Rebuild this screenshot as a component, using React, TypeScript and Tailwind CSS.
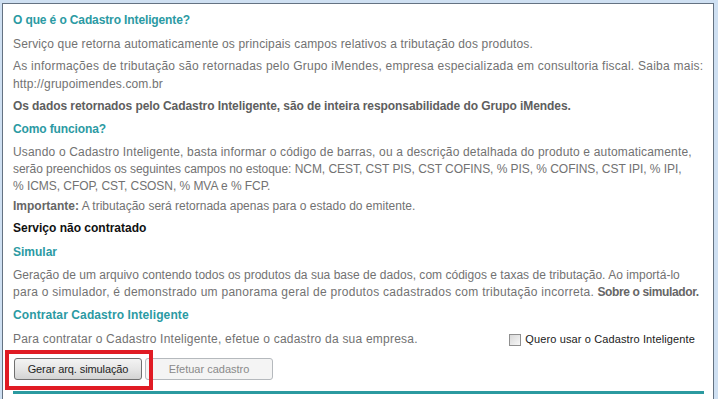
import React from "react";

const body = "text-[12px] leading-[17px] text-[#727272]";
const head = "text-[12px] leading-[17px] font-bold text-[#2b9aa3]";

export default function App() {
  return (
    <div
      className="w-[718px] h-[399px] overflow-hidden bg-[#cfe0f2] pt-[3px] pl-[2px] pr-[4px]"
      style={{ fontFamily: '"Liberation Sans", Arial, sans-serif' }}
    >
      <div className="h-[400px] bg-white border-l border-t border-r border-[#647282] pl-[10px] pr-[8px] flex flex-col">
        <div className={`${head} mt-[8px] tracking-[-0.12px]`}>O que é o Cadastro Inteligente?</div>
        <div className={`${body} mt-[7px] tracking-[0.155px] whitespace-nowrap`}>
          Serviço que retorna automaticamente os principais campos relativos a tributação dos produtos.
        </div>
        <div className={`${body} mt-[4px] leading-[18px] whitespace-nowrap`}>
          <div className="tracking-[0.245px]">
            As informações de tributação são retornadas pelo Grupo iMendes, empresa especializada em consultoria fiscal. Saiba mais:
          </div>
          <div className="tracking-[0.15px]">http://grupoimendes.com.br</div>
        </div>
        <div className="text-[12px] leading-[17px] font-bold text-[#5e5e5e] mt-[5px] tracking-[-0.08px] whitespace-nowrap">
          Os dados retornados pelo Cadastro Inteligente, são de inteira responsabilidade do Grupo iMendes.
        </div>
        <div className={`${head} mt-[6px] tracking-[-0.12px]`}>Como funciona?</div>
        <div className={`${body} mt-[6px] whitespace-nowrap`}>
          <div className="tracking-[0.17px]">
            Usando o Cadastro Inteligente, basta informar o código de barras, ou a descrição detalhada do produto e automaticamente,
          </div>
          <div className="tracking-[-0.05px]">
            serão preenchidos os seguintes campos no estoque: NCM, CEST, CST PIS, CST COFINS, % PIS, % COFINS, CST IPI, % IPI,
          </div>
          <div className="tracking-[-0.05px]">% ICMS, CFOP, CST, CSOSN, % MVA e % FCP.</div>
        </div>
        <div className={`${body} mt-[3px] whitespace-nowrap`}>
          <span className="font-bold text-[#666666]">Importante:</span> A tributação será retornada apenas para o estado do emitente.
        </div>
        <div className="text-[12px] leading-[17px] font-bold text-[#111111] mt-[5px]">Serviço não contratado</div>
        <div className={`${head} mt-[7px]`}>Simular</div>
        <div className={`${body} mt-[5px] whitespace-nowrap`}>
          <div className="tracking-[0.02px] leading-[18px]">
            Geração de um arquivo contendo todos os produtos da sua base de dados, com códigos e taxas de tributação. Ao importá-lo
          </div>
          <div className="leading-[17px]">
            <span className="tracking-[0.277px]">
              para o simulador, é demonstrado um panorama geral de produtos cadastrados com tributação incorreta.
            </span>{" "}
            <span className="font-bold text-[#666666] tracking-[-0.37px]">Sobre o simulador.</span>
          </div>
        </div>
        <div className={`${head} mt-[6px] tracking-[0.1px]`}>Contratar Cadastro Inteligente</div>
        <div className="flex items-center justify-between mt-[7px] pr-[10px]">
          <div className={`${body} tracking-[0.22px] whitespace-nowrap`}>
            Para contratar o Cadastro Inteligente, efetue o cadastro da sua empresa.
          </div>
          <label className="flex items-center gap-[4px] text-[11px] leading-[17px] text-[#1a1a1a] tracking-[0.12px] whitespace-nowrap">
            <span className="w-[12px] h-[12px] border border-[#8f8f8f] bg-gradient-to-br from-[#d8d8d8] to-[#f7f7f7] inline-block" />
            Quero usar o Cadastro Inteligente
          </label>
        </div>
        <div className="flex gap-[3px] mt-[10px] ml-[1px]">
          <div className="relative">
            <button className="w-[128px] h-[22px] rounded-[3px] border border-[#707070] bg-gradient-to-b from-[#f3f3f3] via-[#e6e6e6] to-[#d3d3d3] text-[11px] text-[#1e1e1e] tracking-[-0.1px] flex items-center justify-center">
              Gerar arq. simulação
            </button>
            <div className="absolute left-[-9px] top-[-8px] w-[148px] h-[40px] border-[4px] border-[#e01b24] pointer-events-none" />
          </div>
          <button className="w-[128px] h-[22px] rounded-[3px] border border-[#b5b9bd] bg-[#f4f4f4] text-[11px] text-[#8a8a8a] flex items-center justify-center">
            Efetuar cadastro
          </button>
        </div>
        <div className="h-[3px] bg-[#2b9aa0] mt-[11px] mr-[1px]" />
      </div>
    </div>
  );
}
